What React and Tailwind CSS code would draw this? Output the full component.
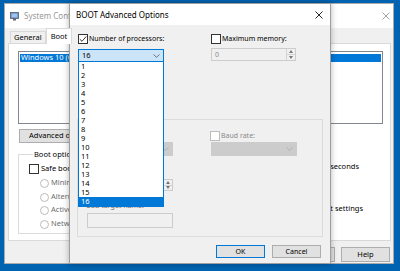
import React from "react";

const Check = ({ checked, disabled }) => (
  <span className={`flex items-center justify-center w-[10px] h-[10px] shrink-0 border bg-white ${disabled ? "border-[#bcbcbc]" : "border-[#333333]"}`}>
    {checked && (
      <svg width="8" height="8" viewBox="0 0 8 8">
        <path d="M0.8 4.2 L3 6.3 L7.3 1.4" fill="none" stroke="#222" strokeWidth="0.9" />
      </svg>
    )}
  </span>
);

const Radio = () => (
  <span className="w-[9px] h-[9px] shrink-0 rounded-full border border-[#bcbcbc] bg-white" />
);

const Chevron = ({ color = "#555" }) => (
  <svg width="7" height="4" viewBox="0 0 7 4">
    <path d="M0.5 0.5 L3.5 3.3 L6.5 0.5" fill="none" stroke={color} strokeWidth="0.8" />
  </svg>
);

const CloseX = ({ color }) => (
  <svg width="8" height="8" viewBox="0 0 8 8">
    <path d="M0.5 0.5 L7.5 7.5 M7.5 0.5 L0.5 7.5" stroke={color} strokeWidth="0.9" />
  </svg>
);

const Spin = () => (
  <div className="flex flex-col w-[9px] h-full ml-auto border-l border-[#d4d4d4]">
    <div className="flex-1 flex items-center justify-center border-b border-[#d4d4d4]">
      <svg width="4" height="3" viewBox="0 0 4 3"><path d="M0 3 L2 0 L4 3Z" fill="#777" /></svg>
    </div>
    <div className="flex-1 flex items-center justify-center">
      <svg width="4" height="3" viewBox="0 0 4 3"><path d="M0 0 L2 3 L4 0Z" fill="#777" /></svg>
    </div>
  </div>
);

const MsIcon = () => (
  <svg width="9" height="9" viewBox="0 0 9 9">
    <rect x="0.5" y="0.5" width="8" height="6" fill="#5d7fb8" stroke="#555e6e" strokeWidth="0.8" />
    <rect x="1.5" y="1.5" width="6" height="4" fill="#9fc3ee" />
    <rect x="3" y="7" width="3" height="1.5" fill="#666" />
  </svg>
);

const Btn = ({ children, primary, className = "" }) => (
  <div className={`flex items-center justify-center w-[49px] bg-[#e1e1e1] border ${primary ? "border-[#0078d7]" : "border-[#adadad]"} ${className}`}>
    {children}
  </div>
);

const processors = Array.from({ length: 16 }, (_, i) => i + 1);

export default function App() {
  return (
    <div className="relative w-[400px] h-[271px] overflow-hidden bg-[#0063b1] text-[7.5px] leading-none text-black font-['Noto_Sans',sans-serif]">
      {/* System Configuration window (behind) */}
      <div className="absolute left-[4px] top-[3px] w-[390px] h-[261px] flex flex-col bg-[#f0f0f0] border border-[#aaaaaa]">
        <div className="h-[24px] shrink-0 bg-white flex items-center pl-[5px] pr-[3px]">
          <MsIcon />
          <span className="ml-[5px] text-[8px] text-[#999999]">System Configuration</span>
          <span className="ml-auto"><CloseX color="#999999" /></span>
        </div>
        <div className="flex items-end h-[15px] pl-[5px]">
          <div className="h-[12px] px-[3px] flex items-center bg-[#f0f0f0] border border-b-0 border-[#d9d9d9]">General</div>
          <div className="relative z-10 -mb-px h-[16px] px-[4px] flex items-center bg-white border border-b-0 border-[#d9d9d9]">Boot</div>
        </div>
        <div className="ml-[3px] w-[383px] h-[198px] flex flex-col pl-[9px] pt-[7px] bg-white border border-[#d9d9d9]">
          <div className="w-[365px] h-[73px] border border-[#828790] pt-[2px] px-[1px]">
            <div className="h-[8px] flex items-center pl-[1px] bg-[#0078d7] text-white">Windows 10 (C:\WINDOWS)</div>
          </div>
          <div className="flex gap-[6px] mt-[5px] ml-[1px]">
            <div className="w-[96px] h-[14px] px-[9px] flex items-center bg-[#e1e1e1] border border-[#adadad]">Advanced options...</div>
          </div>
          <div className="flex items-start mt-[6px]">
            <fieldset className="w-[250px] border border-[#dcdcdc] pl-[10px] pt-[5px] pb-[4px]">
              <legend className="ml-[4px] px-[1px] h-[10px] leading-[10px]">Boot options</legend>
              <div className="flex items-center h-[10px] gap-[2px]"><Check />Safe boot</div>
              <div className="flex items-center h-[10px] gap-[2px] pl-[11px] mt-[4px] text-[#6d6d6d]"><Radio />Minimal</div>
              <div className="flex items-center h-[10px] gap-[2px] pl-[11px] mt-[4px] text-[#6d6d6d]"><Radio />Alternate shell</div>
              <div className="flex items-center h-[10px] gap-[2px] pl-[11px] mt-[3px] text-[#6d6d6d]"><Radio />Active Directory repair</div>
              <div className="flex items-center h-[10px] gap-[2px] pl-[11px] mt-[4px] text-[#6d6d6d]"><Radio />Network</div>
            </fieldset>
            <div className="ml-auto flex flex-col items-end">
              <div className="mt-[12px] mr-[31px] h-[12px] flex items-center gap-[3px]">
                <span className="w-[26px] h-[12px] border border-[#7a7a7a]" />
                <span>seconds</span>
              </div>
              <div className="mt-[30px] mr-[27px] flex items-start gap-[2px]">
                <Check />
                <span className="leading-[10px]">Make all boot settings</span>
              </div>
            </div>
          </div>
        </div>
        <div className="flex justify-end gap-[6px] pr-[3px] mt-[6px]">
          <Btn className="h-[15px]" />
          <Btn className="h-[15px]" />
          <Btn className="h-[15px]" />
          <Btn className="h-[15px]">Help</Btn>
        </div>
      </div>

      {/* BOOT Advanced Options dialog */}
      <div className="absolute left-[69px] top-[3px] w-[262px] h-[261px] flex flex-col bg-[#f0f0f0] border border-[#9e9e9e] shadow-[0_0_6px_rgba(0,0,0,0.3)] text-[7px]">
        <div className="h-[21px] shrink-0 bg-white flex items-center pl-[6px] pr-[7px]">
          <span className="text-[8px]">BOOT Advanced Options</span>
          <span className="ml-auto"><CloseX color="#111111" /></span>
        </div>
        <div className="flex flex-col px-[8px] pt-[8px]">
          <div className="flex">
            <div className="w-[133px] flex flex-col">
              <div className="flex items-center h-[11px] gap-[1px]"><Check checked />Number of processors:</div>
              <div className="relative mt-[5px] w-[86px] h-[13px] flex items-center justify-between pl-[3px] pr-[3px] bg-[#cce4f7] border border-[#0078d7]">
                <span className="text-[7.5px]">16</span>
                <Chevron />
                <div className="absolute z-20 left-[-1px] top-[12px] w-[86px] h-[145px] bg-white border-x border-b border-[#0078d7] text-[7.5px]">
                  {processors.map((n) => (
                    <div key={n} className={`h-[9px] flex items-center pl-[2px] ${n === 16 ? "bg-[#0078d7] text-white" : ""}`}>{n}</div>
                  ))}
                </div>
              </div>
              <div className="flex items-center h-[11px] mt-[12px]"><Check /></div>
              <div className="flex items-center h-[11px] mt-[9px]"><Check /></div>
            </div>
            <div className="flex flex-col">
              <div className="flex items-center h-[11px] gap-[1px]"><Check />Maximum memory:</div>
              <div className="mt-[4px] w-[85px] h-[13px] flex items-center pl-[3px] bg-[#f0f0f0] border border-[#cccccc] text-[#8a8a8a]">
                <span>0</span>
                <Spin />
              </div>
            </div>
          </div>
          <div className="mt-[14px] -ml-px w-[246px] h-[118px] flex flex-col border border-[#dcdcdc] pl-[9px] pt-[10px]">
            <div className="flex">
              <div className="w-[123px] flex flex-col">
                <div className="flex items-center h-[11px]"><Check disabled /></div>
                <div className="mt-[1px] w-[86px] h-[14px] flex items-center justify-end pr-[3px] bg-[#cccccc] border border-[#cccccc]">
                  <Chevron color="#a8a8a8" />
                </div>
                <div className="flex items-center h-[11px] mt-[9px]"><Check disabled /></div>
                <div className="mt-[3px] w-[86px] h-[12px] flex items-center bg-[#f0f0f0] border border-[#cccccc]">
                  <Spin />
                </div>
                <div className="flex items-center h-[11px] mt-[9px] -ml-px text-[#6d6d6d]">USB target name:</div>
                <div className="mt-[2px] w-[86px] h-[15px] bg-[#f0f0f0] border border-[#cccccc]" />
              </div>
              <div className="flex flex-col">
                <div className="flex items-center h-[11px] gap-[1px] text-[#8a8a8a]"><Check disabled />Baud rate:</div>
                <div className="mt-[1px] ml-px w-[86px] h-[14px] flex items-center justify-end pr-[3px] bg-[#cccccc] border border-[#cccccc]">
                  <Chevron color="#a8a8a8" />
                </div>
              </div>
            </div>
          </div>
          <div className="flex justify-end gap-[7px] mt-[8px] mr-px">
            <Btn primary className="h-[13px]">OK</Btn>
            <Btn className="h-[13px]">Cancel</Btn>
          </div>
        </div>
      </div>
    </div>
  );
}
